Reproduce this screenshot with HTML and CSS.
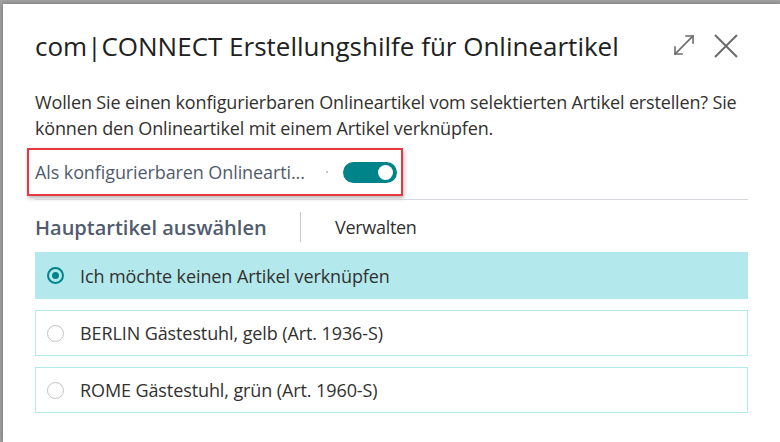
FILE: index.html
```html
<!DOCTYPE html>
<html lang="de">
<head>
<meta charset="utf-8">
<title>com|CONNECT Erstellungshilfe</title>
<link rel="stylesheet" href="styles.css">
</head>
<body>
<div class="dialog">
  <div class="header">
    <h1 class="title">com|CONNECT Erstellungshilfe für Onlineartikel</h1>
    <div class="actions">
      <svg class="icon-expand" width="22" height="22" viewBox="0 0 22 22" fill="none" stroke="#6b6b6b" stroke-width="1.6" stroke-linecap="square">
        <path d="M2 20 L20 2"/>
        <path d="M13 2 H20 V9"/>
        <path d="M2 13 V20 H9"/>
      </svg>
      <svg class="icon-close" width="24" height="24" viewBox="0 0 24 24" fill="none" stroke="#6b6b6b" stroke-width="2">
        <path d="M1 1 L23 23 M23 1 L1 23"/>
      </svg>
    </div>
  </div>
  <p class="desc">Wollen Sie einen konfigurierbaren Onlineartikel vom selektierten Artikel erstellen? Sie können den Onlineartikel mit einem Artikel verknüpfen.</p>
  <div class="field">
    <span class="field-label">Als konfigurierbaren Onlinearti...</span>
    <span class="field-dot"></span>
    <span class="toggle"><span class="knob"></span></span>
  </div>
  <div class="divider"></div>
  <div class="section-head">
    <span class="section-title">Hauptartikel auswählen</span>
    <span class="section-sep"></span>
    <span class="section-action">Verwalten</span>
  </div>
  <div class="options">
    <div class="option selected"><span class="radio checked"></span><span>Ich möchte keinen Artikel verknüpfen</span></div>
    <div class="option"><span class="radio"></span><span>BERLIN Gästestuhl, gelb (Art. 1936-S)</span></div>
    <div class="option"><span class="radio"></span><span>ROME Gästestuhl, grün (Art. 1960-S)</span></div>
  </div>
</div>
</body>
</html>
```

FILE: styles.css
```css
html, body {
  margin: 0;
  padding: 0;
  height: 100%;
  overflow: hidden;
}
body {
  background: #a3a3a3;
  font-family: "Open Sans", "Noto Sans", sans-serif;
  color: #323130;
}
.dialog {
  margin: 4px 0 0 3px;
  height: 438px;
  background: #fff;
  box-shadow: 0 0 5px rgba(0, 0, 0, 0.35);
  padding: 0 32px 0 32px;
  box-sizing: border-box;
}
.header {
  display: flex;
  align-items: center;
  justify-content: space-between;
  padding-top: 26px;
  height: 32px;
}
.title {
  margin: 0;
  font-size: 26px;
  font-weight: 400;
  line-height: 32px;
  letter-spacing: 0;
  color: #212121;
  white-space: nowrap;
}
.actions {
  display: flex;
  align-items: center;
  gap: 19px;
  margin-right: 10px;
}
.icon-expand {
  width: 22px;
  height: 22px;
  margin-top: -2px;
}
.icon-close {
  width: 24px;
  height: 24px;
}
.desc {
  margin: 27px 0 0 0;
  font-size: 18px;
  line-height: 26px;
  letter-spacing: -0.15px;
  color: #323130;
}
.field {
  margin: 7px 0 0 -8px;
  width: 376px;
  height: 48px;
  box-sizing: border-box;
  border: 2px solid #e8373e;
  box-shadow: 1px 2px 4px rgba(0, 0, 0, 0.3);
  display: flex;
  align-items: center;
  padding: 0 4px 0 6px;
}
.field-label {
  flex: 1;
  font-size: 18px;
  letter-spacing: -0.1px;
  color: #505c6d;
  white-space: nowrap;
}
.field-dot {
  width: 2px;
  height: 2px;
  background: #c8c8c8;
  margin-right: 15px;
}
.toggle {
  width: 54px;
  height: 21px;
  border-radius: 11px;
  background: #008489;
  position: relative;
  display: block;
}
.knob {
  position: absolute;
  right: 4px;
  top: 3px;
  width: 15px;
  height: 15px;
  border-radius: 50%;
  background: #fff;
}
.divider {
  margin-top: 3px;
  height: 1px;
  background: #d6d6dc;
}
.section-head {
  display: flex;
  align-items: center;
  margin-top: 12px;
  height: 30px;
}
.section-title {
  font-size: 20px;
  font-weight: 600;
  letter-spacing: 0;
  color: #505c6d;
  width: 265px;
  white-space: nowrap;
}
.section-sep {
  width: 1px;
  height: 30px;
  background: #c8c8c8;
  margin-right: 34px;
}
.section-action {
  font-size: 18px;
  letter-spacing: -0.3px;
  color: #323130;
}
.options {
  margin-top: 10px;
  display: flex;
  flex-direction: column;
  gap: 11px;
}
.option {
  height: 46px;
  box-sizing: border-box;
  border: 1px solid #b3e8ec;
  display: flex;
  align-items: center;
  padding-left: 11px;
  gap: 16px;
  font-size: 18px;
  letter-spacing: -0.1px;
  color: #323130;
}
.option.selected {
  background: #b3e8ec;
  height: 47px;
}
.radio {
  width: 17px;
  height: 17px;
  box-sizing: border-box;
  border-radius: 50%;
  border: 1px solid #c2c2c2;
  background: #fff;
  display: flex;
  align-items: center;
  justify-content: center;
}
.radio.checked {
  border: 2px solid #00848a;
  background: transparent;
}
.radio.checked::after {
  content: "";
  width: 7px;
  height: 7px;
  border-radius: 50%;
  background: #00848a;
}
```
